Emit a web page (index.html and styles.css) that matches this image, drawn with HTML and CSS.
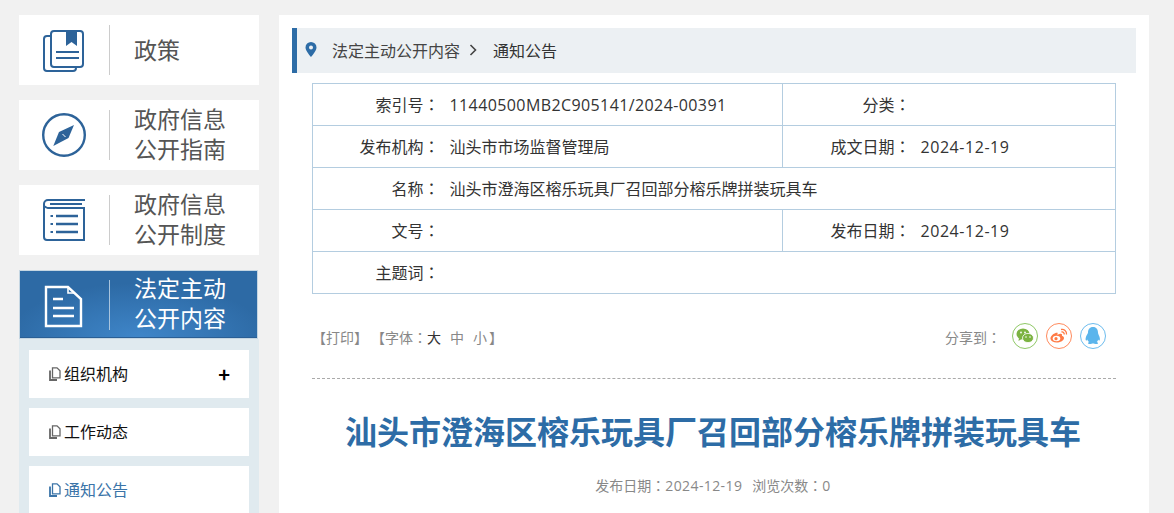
FILE: index.html
```html
<!DOCTYPE html>
<html lang="zh-CN">
<head>
<meta charset="utf-8">
<title>通知公告</title>
<link rel="stylesheet" href="styles.css">
</head>
<body>
<div class="page">
  <aside class="side">
    <a class="nav">
      <span class="nav-ico"><svg width="72" height="44" viewBox="0 0 72 44" fill="none" stroke="#2d6399" stroke-width="2"><path d="M32 8h-4a3 3 0 0 0-3 3v29a3 3 0 0 0 3 3h26a3 3 0 0 0 3-3"/><rect x="32" y="3" width="32" height="36" rx="3" fill="#fff"/><path d="M47 3h11v15l-5.500-4-5.500 4z" fill="#2d6399" stroke="none"/><path d="M37 24h23M37 30h23" stroke-width="1.800"/></svg></span>
      <span class="nav-txt">政策</span>
    </a>
    <a class="nav">
      <span class="nav-ico"><svg width="72" height="44" viewBox="0 0 72 44" fill="none"><circle cx="45" cy="22" r="20.800" stroke="#2d6399" stroke-width="2.400"/><path d="M55 12 49.500 25 34.300 33 40 19z" fill="#2d6399"/><path d="M43.500 21 46.500 24" stroke="#fff" stroke-width="1"/></svg></span>
      <span class="nav-txt nav-two">政府信息<br>公开指南</span>
    </a>
    <a class="nav">
      <span class="nav-ico"><svg width="72" height="44" viewBox="0 0 72 44" fill="none" stroke="#2d6399"><path d="M66 2H29a4 4 0 0 0-4 4v33a3 3 0 0 0 3 3h37V10H29a3 3 0 0 1-3-2" stroke-width="2"/><path d="M31 6h32" stroke-width="2"/><path d="M37 18h22M37 26h22M37 34h22" stroke-width="2.600"/><path d="M31.500 18h2.500M31.500 26h2.500M31.500 34h2.500" stroke-width="2.200"/></svg></span>
      <span class="nav-txt nav-two">政府信息<br>公开制度</span>
    </a>
    <a class="nav nav-on">
      <span class="nav-ico"><svg width="72" height="46" viewBox="0 0 72 46" fill="none" stroke="#fff" stroke-width="2.400"><path d="M26 5h22l13 12v27H26z"/><path d="M48 5v6h6" stroke-width="1.600"/><path d="M33 17h10M33 26h21M33 34h21" stroke-width="2.600"/></svg></span>
      <span class="nav-txt nav-two">法定主动<br>公开内容</span>
    </a>
    <div class="sub">
      <a class="sub-item">
        <svg class="doc" width="12" height="14" viewBox="0 0 12 14" fill="none" stroke="currentColor"><path d="M3.500 .8h4.500l3 3v7h-7.500z" stroke-width="1.300"/><path d="M1 3.500v9.500h7" stroke-width="1.800"/></svg>
        <span class="sub-txt">组织机构</span><span class="plus">+</span>
      </a>
      <a class="sub-item">
        <svg class="doc" width="12" height="14" viewBox="0 0 12 14" fill="none" stroke="currentColor"><path d="M3.500 .8h4.500l3 3v7h-7.500z" stroke-width="1.300"/><path d="M1 3.500v9.500h7" stroke-width="1.800"/></svg>
        <span class="sub-txt">工作动态</span>
      </a>
      <a class="sub-item sub-on">
        <svg class="doc" width="12" height="14" viewBox="0 0 12 14" fill="none" stroke="currentColor"><path d="M3.500 .8h4.500l3 3v7h-7.500z" stroke-width="1.300"/><path d="M1 3.500v9.500h7" stroke-width="1.800"/></svg>
        <span class="sub-txt">通知公告</span>
      </a>
    </div>
  </aside>
  <main class="main">
    <div class="crumb">
      <svg class="pin" width="12" height="15" viewBox="0 0 12 15"><path fill-rule="evenodd" d="M6 0a5.500 5.500 0 0 1 5.500 5.500C11.500 9 6 15 6 15S.5 9 .5 5.500A5.500 5.500 0 0 1 6 0zm0 3.500a2 2 0 1 0 0 4 2 2 0 0 0 0-4z" fill="#2d6ca6"/></svg>
      <span class="crumb-a">法定主动公开内容</span>
      <svg class="chev" width="8" height="12" viewBox="0 0 8 12" fill="none" stroke="#444" stroke-width="1.600"><path d="M1.500 1l5 5-5 5"/></svg>
      <span class="crumb-b">通知公告</span>
    </div>
    <table class="info">
      <colgroup><col class="c1"><col class="c2"><col class="c3"><col class="c4"></colgroup>
      <tr><th>索引号<span class="colon">：</span></th><td class="num">11440500MB2C905141/2024-00391</td><th>分类<span class="colon">：</span></th><td></td></tr>
      <tr><th>发布机构<span class="colon">：</span></th><td>汕头市市场监督管理局</td><th>成文日期<span class="colon">：</span></th><td class="num date">2024-12-19</td></tr>
      <tr><th>名称<span class="colon">：</span></th><td colspan="3">汕头市澄海区榕乐玩具厂召回部分榕乐牌拼装玩具车</td></tr>
      <tr><th>文号<span class="colon">：</span></th><td></td><th>发布日期<span class="colon">：</span></th><td class="num date">2024-12-19</td></tr>
      <tr><th>主题词<span class="colon">：</span></th><td colspan="3"></td></tr>
    </table>
    <div class="tools">
      <div class="tools-l"><span>【打印】</span><span class="font-set">【字体<span class="colon">：</span><b class="big">大</b><i>中</i><i>小</i><i class="close">】</i></span></div>
      <div class="share">
        <span class="share-t">分享到<span class="colon">：</span></span>
        <span class="sh sh-wx"><svg width="18" height="16" viewBox="0 0 18 16"><ellipse cx="7" cy="6" rx="6.500" ry="5.500" fill="#7cb342"/><path d="M3 10l-.5 3 3-2z" fill="#7cb342"/><ellipse cx="12" cy="10" rx="5.500" ry="4.600" fill="#7cb342" stroke="#fff" stroke-width=".8"/><circle cx="5" cy="4.500" r=".9" fill="#fff"/><circle cx="9" cy="4.500" r=".9" fill="#fff"/><circle cx="10" cy="9" r=".8" fill="#fff"/><circle cx="14" cy="9" r=".8" fill="#fff"/></svg></span>
        <span class="sh sh-wb"><svg width="18" height="16" viewBox="0 0 18 16"><path d="M7.500 4.500C3.500 5 0 8.500 .5 11s4 4 7.500 3.500 6-2.500 6-4.500c0-1.500-1.500-2-2-2 .5-1.500-.5-2.500-2.500-2-1.500.5-2 1-2 1s.5-2.500-.5-2.500z" fill="#ff7a45"/><ellipse cx="6.500" cy="10.500" rx="3.800" ry="2.800" fill="#fff"/><circle cx="6" cy="10.700" r="1.600" fill="#ff7a45"/><path d="M11 1.500c3-.8 6 1.500 5.500 5M11.500 4c1.500-.4 3 .7 2.700 2.500" fill="none" stroke="#ff7a45" stroke-width="1.300"/></svg></span>
        <span class="sh sh-qq"><svg width="16" height="18" viewBox="0 0 16 18"><path d="M8 0c3.500 0 5 2.500 5 5.500 0 1 .5 2 1.200 3.500.8 2 1 4 .3 4.500-.4.300-1.200-.5-1.500-1 0 1-.5 2-1.300 2.600 1 .4 1.500.8 1.300 1.400-.2.500-2 .5-3.500.2-.5-.1-.5-.3-1.500-.3s-1 .2-1.500.3c-1.500.3-3.300.3-3.500-.2-.2-.6.300-1 1.300-1.400C3 14.500 2.500 13.500 2.500 12.500c-.3.500-1.100 1.300-1.500 1-.7-.5-.5-2.500.3-4.500C2 7.500 3 6.500 3 5.500 3 2.500 4.500 0 8 0z" fill="#5bb5ec"/></svg></span>
      </div>
    </div>
    <h1 class="title">汕头市澄海区榕乐玩具厂召回部分榕乐牌拼装玩具车</h1>
    <p class="meta">发布日期<span class="colon">：</span><span class="meta-num">2024-12-19</span><span class="meta-gap">浏览次数</span><span class="colon">：</span><span class="meta-num">0</span></p>
  </main>
</div>
</body>
</html>
```

FILE: styles.css
```css
html, body {
  margin: 0;
  height: 513px;
  overflow: hidden;
  background: #f1f1f1;
}
body {
  font-family: "Noto Sans CJK SC", "Noto Sans", sans-serif;
  color: #333;
}
.page {
  display: flex;
  align-items: flex-start;
  gap: 20px;
  padding: 15px 25px 0 19px;
}
.side {
  width: 240px;
  flex: none;
  display: flex;
  flex-direction: column;
  gap: 15px;
}
.nav {
  height: 70px;
  background: #fff;
  display: flex;
  align-items: center;
}
.nav-ico {
  width: 90px;
  height: 50px;
  flex: none;
  border-right: 1px solid #ccc;
  display: flex;
  align-items: center;
}
.nav-ico svg { display: block; }
.nav-txt {
  margin: 0 0 3px 24px;
  font-size: 23px;
  line-height: 30px;
  color: #555;
}
.nav-two { margin-bottom: 5px; }
.nav-on {
  height: 67px;
  width: 237px;
  margin-bottom: -15px;
  background: radial-gradient(ellipse 130px 55px at 50% 100%, #3f86c9 0%, #2d6aa5 100%);
  border: 1px solid #c5d6e2;
  box-shadow: inset 0 -1px #2a5f95;
}
.nav-on .nav-ico { width: 89px; border-right-color: #a8c4de; }
.nav-on .nav-txt { color: #fff; }
.sub {
  background: #e0eaef;
  padding: 11px 10px 30px;
  display: flex;
  flex-direction: column;
  gap: 10px;
}
.sub-item {
  height: 48px;
  background: #fff;
  display: flex;
  align-items: center;
  padding: 0 19px 0 20px;
  color: #111;
  font-size: 16px;
}
.doc { color: #666; flex: none; margin-right: 3px; }
.sub-txt { flex: 1; margin-bottom: 3px; }
.plus { font-size: 20px; font-weight: 700; color: #000; line-height: 1; }
.sub-on, .sub-on .doc { color: #3b74a8; }
.main {
  width: 844px;
  min-height: 498px;
  background: #fff;
  padding: 13px 13px 0;
  flex: none;
}
.crumb {
  height: 45px;
  background: #ecf0f3;
  border-left: 5px solid #2d6ca6;
  display: flex;
  align-items: center;
  font-size: 16px;
  color: #444;
}
.pin { margin-left: 8px; margin-top: -3px; }
.crumb-a { margin: 0 0 2px 15px; }
.chev { margin-left: 9px; margin-top: -2px; }
.crumb-b { margin: 0 0 2px 16px; color: #333; }
.info {
  width: 803px;
  margin: 10px 0 0 20px;
  border-collapse: collapse;
  table-layout: fixed;
  font-size: 16px;
  color: #333;
}
.info th, .info td {
  height: 39px;
  padding: 0 0 2px;
  border: 1px solid #b4cde0;
  font-weight: 400;
  line-height: 20px;
}
.info th {
  text-align: right;
  padding-right: 10px;
  border-right: 0;
}
.info td { border-left: 0; }
.colon {
  font-family: "Noto Sans CJK TC", sans-serif;
  font-feature-settings: "locl" 0;
}
.c1 { width: 137px; }
.c2 { width: 333px; }
.c3 { width: 138px; }
.c4 { width: 195px; }
.info .num {
  font-family: "Open Sans", "Noto Sans CJK SC", sans-serif;
  letter-spacing: .4px;
  padding-bottom: 0;
}
.info .date { letter-spacing: .55px; }
.tools {
  margin: 15px 0 0 20px;
  width: 804px;
  height: 69px;
  border-bottom: 1px dashed #aaa;
  display: flex;
  justify-content: space-between;
  color: #888;
  font-size: 14px;
}
.tools-l { padding-top: 18px; line-height: 20px; }
.font-set { margin-left: 10px; }
.big { font-weight: 400; color: #333; }
.font-set i { font-style: normal; margin-left: 9px; }
.font-set .close { margin-left: 2px; }
.share { display: flex; align-items: flex-start; gap: 8px; padding: 14px 10px 0 0; }
.share-t { font-size: 14px; line-height: 20px; margin: 4px 3px 0 0; color: #888; }
.sh {
  width: 24px;
  height: 24px;
  border: 1px solid;
  border-radius: 50%;
  display: flex;
  align-items: center;
  justify-content: center;
}
.sh-wx { border-color: #8fc866; }
.sh-wb { border-color: #ff8a5c; }
.sh-qq { border-color: #6cbcee; }
.title {
  margin: 27px 0 0;
  padding-right: 2px;
  text-align: center;
  font-size: 32px;
  line-height: 48px;
  font-weight: 700;
  color: #2d6ca6;
}
.meta {
  margin: 21px 0 0;
  padding-right: 2px;
  text-align: center;
  font-size: 14px;
  line-height: 20px;
  color: #888;
}
.meta-num { font-family: "Open Sans", sans-serif; letter-spacing: .4px; }
.meta-gap { margin-left: 10px; }
```
